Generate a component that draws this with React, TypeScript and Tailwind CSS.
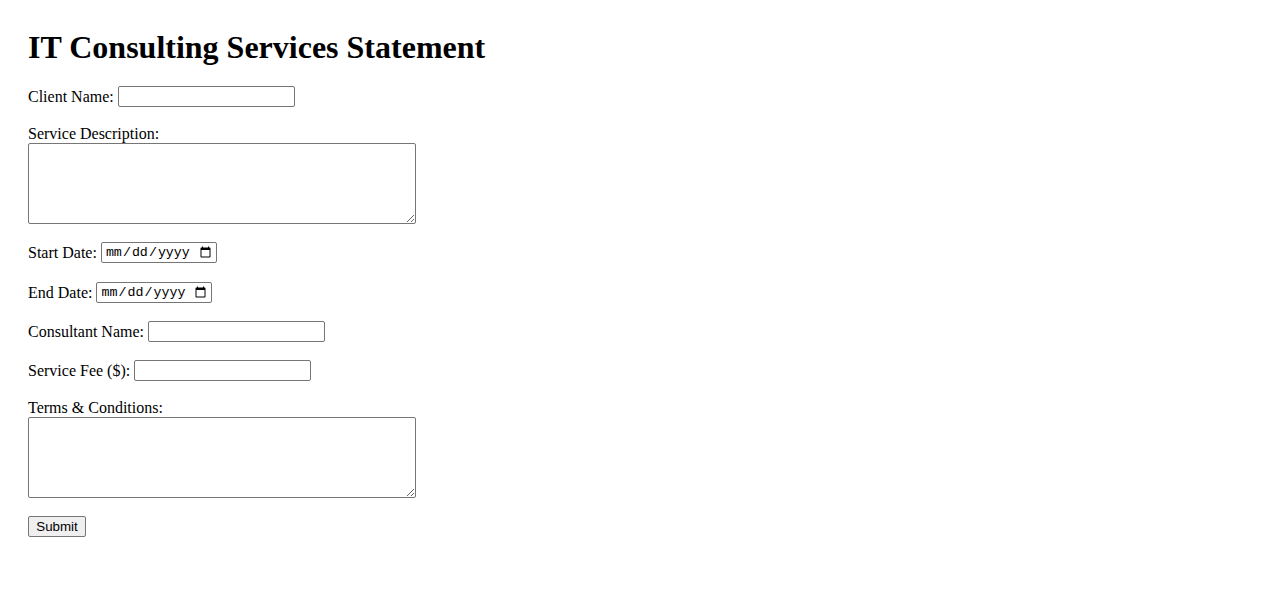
import React from 'react';

const textInput =
  'h-[21px] w-[177px] rounded-[2px] border border-[#767676] bg-white px-[2px] py-[1px] font-["Liberation_Sans"] text-[13.33px] text-black outline-none';

const dateInput =
  'h-[21px] w-[116px] rounded-[2px] border border-[#767676] bg-white pl-[3px] pr-[2px] py-[1px] font-["Liberation_Mono"] text-[13.33px] text-black outline-none';

const areaInput =
  'block h-[81px] w-[388px] rounded-[2px] border border-[#767676] bg-white px-[2px] py-[1px] font-["Liberation_Mono"] text-[13.33px] text-black outline-none';

const Row: React.FC<{ label: string; className: string; type?: string; mt: string }> = ({
  label,
  className,
  type = 'text',
  mt,
}) => (
  <div className={`flex h-[21px] items-center gap-1 ${mt}`}>
    <label className="leading-[18px]">{label}</label>
    <input type={type} className={className} />
  </div>
);

export default function App() {
  return (
    <div className="min-h-screen bg-white pl-[28px] pt-[29px] font-['Liberation_Serif'] text-base text-black">
      <h1 className="text-[32px] font-bold leading-[37px]">IT Consulting Services Statement</h1>

      <form className="flex flex-col items-start" onSubmit={(e) => e.preventDefault()}>
        <Row label="Client Name:" className={textInput} mt="mt-[20px]" />

        <label className="mt-[18px] leading-[18px]">Service Description:</label>
        <textarea className={`${areaInput} mt-0`} />

        <Row label="Start Date:" type="date" className={dateInput} mt="mt-[18px]" />
        <Row label="End Date:" type="date" className={dateInput} mt="mt-[19px]" />
        <Row label="Consultant Name:" className={textInput} mt="mt-[18px]" />
        <Row label="Service Fee ($):" type="number" className={textInput} mt="mt-[18px]" />

        <label className="mt-[18px] leading-[18px]">Terms &amp; Conditions:</label>
        <textarea className={`${areaInput} mt-0`} />

        <button
          type="submit"
          className="mt-[18px] h-[21px] w-[58px] rounded-[2px] border border-[#767676] bg-[#efefef] font-['Liberation_Sans'] text-[13.33px] leading-none text-black"
        >
          Submit
        </button>
      </form>
    </div>
  );
}
